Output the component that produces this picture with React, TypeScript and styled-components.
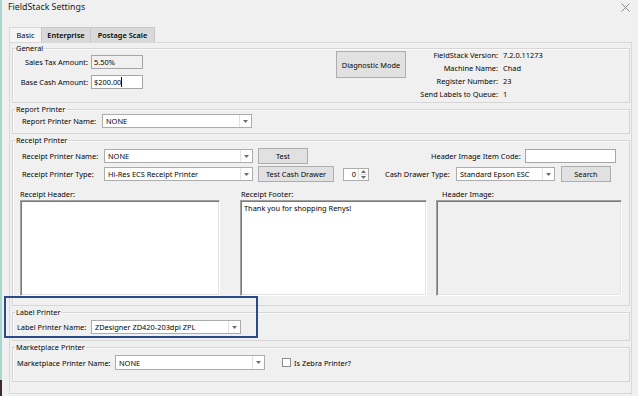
import React from 'react'
import styled, { createGlobalStyle } from 'styled-components'

const GlobalStyle = createGlobalStyle`
  html, body {
    margin: 0;
    padding: 0;
    background: #f0f0f0;
  }
  body {
    font-family: 'Noto Sans', 'Open Sans', sans-serif;
  }
`

const Window = styled.div`
  position: relative;
  width: 638px;
  height: 396px;
  display: flex;
  background: #f0f0f0;
  color: #050505;
  font-size: 7.4px;
  overflow: hidden;
`

const Edge = styled.div`
  width: 2px;
  display: flex;
  flex-direction: column;
`
const EdgeTop = styled.div`
  flex: 1;
  background: #a9d6cf;
`
const EdgeBottom = styled.div`
  height: 16px;
  background: #3b2c2b;
`

const Main = styled.div`
  flex: 1;
  display: flex;
  flex-direction: column;
`

const TitleBar = styled.div`
  height: 27px;
  display: flex;
  justify-content: space-between;
  align-items: flex-start;
  padding: 2px 8px 0 6px;
  box-sizing: border-box;
`
const Title = styled.div`
  font-size: 8.8px;
  line-height: 11px;
  color: #1a1a1a;
`
const CloseButton = styled.div`
  width: 9px;
  height: 9px;
  margin-top: 1px;
  display: flex;
`

const TabStrip = styled.div`
  display: flex;
  height: 15px;
  margin-left: 7px;
`
const Tab = styled.div<{ $w: number; $active?: boolean }>`
  width: ${p => p.$w}px;
  box-sizing: border-box;
  display: flex;
  align-items: center;
  justify-content: center;
  background: ${p => (p.$active ? '#f5f5f5' : '#d9d9d9')};
  border: 1px solid ${p => (p.$active ? '#d9d9d9' : '#c6c6c6')};
  border-bottom: none;
  margin-left: ${p => (p.$active ? 0 : -1)}px;
  font-weight: ${p => (p.$active ? 400 : 600)};
`

const TabPage = styled.div`
  height: 352px;
  margin: 0 6px 0 7px;
  padding: 0 1px 0 2px;
  border: 1px solid #d9d9d9;
  box-sizing: border-box;
  display: flex;
  flex-direction: column;
  gap: 1px;
`

const Group = styled.fieldset<{ $h: number }>`
  margin: 0;
  padding: 0;
  min-width: 0;
  height: ${p => p.$h}px;
  box-sizing: border-box;
  border: 1px solid #d6d6d6;
  box-shadow: inset 1px 1px 0 #fafafa;
`
const Legend = styled.legend`
  margin-left: 2px;
  padding: 0 1px;
  line-height: 10px;
`

const GeneralBody = styled.div`
  display: flex;
  align-items: flex-start;
`
const FieldGrid = styled.div`
  display: grid;
  grid-template-columns: 75px 52px;
  grid-auto-rows: 14px;
  column-gap: 3px;
  row-gap: 6px;
  padding-top: 2px;
`
const RightLabel = styled.div`
  text-align: right;
  align-self: center;
  white-space: nowrap;
`
const InfoGrid = styled.div`
  display: grid;
  grid-template-columns: 92px auto;
  grid-auto-rows: 13px;
  column-gap: 5px;
  margin-top: -5px;
  align-items: center;
`

const Row = styled.div<{ $h: number; $top?: number; $left?: number }>`
  display: flex;
  align-items: center;
  height: ${p => p.$h}px;
  margin-top: ${p => p.$top || 0}px;
  padding-left: ${p => p.$left || 0}px;
`
const Label = styled.div<{ $w?: number; $ml?: number; $right?: boolean }>`
  width: ${p => (p.$w ? `${p.$w}px` : 'auto')};
  margin-left: ${p => p.$ml || 0}px;
  text-align: ${p => (p.$right ? 'right' : 'left')};
  white-space: nowrap;
  flex-shrink: 0;
`

const TextBox = styled.div<{ $w?: number; $readOnly?: boolean; $ml?: number }>`
  width: ${p => (p.$w ? `${p.$w}px` : '100%')};
  height: 14px;
  margin-left: ${p => p.$ml || 0}px;
  box-sizing: border-box;
  border: 1px solid #a6a6a6;
  background: ${p => (p.$readOnly ? '#f0f0f0' : '#fff')};
  padding: 0 2px;
  display: flex;
  align-items: center;
  white-space: nowrap;
  flex-shrink: 0;
`
const Caret = styled.span`
  display: inline-block;
  width: 1px;
  height: 10px;
  background: #000;
`

const Combo = styled.div<{ $w: number; $h?: number }>`
  width: ${p => p.$w}px;
  height: ${p => p.$h || 14}px;
  box-sizing: border-box;
  border: 1px solid #acacac;
  background: #fff;
  display: flex;
  flex-shrink: 0;
`
const ComboValue = styled.div`
  flex: 1;
  padding-left: 3px;
  display: flex;
  align-items: center;
  white-space: nowrap;
  overflow: hidden;
`
const ComboArrow = styled.div`
  width: 11px;
  border-left: 1px solid #e2e2e2;
  display: flex;
  align-items: center;
  justify-content: center;
`

const Button = styled.div<{ $w: number; $h?: number; $ml?: number; $mt?: number }>`
  width: ${p => p.$w}px;
  height: ${p => p.$h || 16}px;
  margin-left: ${p => p.$ml || 0}px;
  margin-top: ${p => p.$mt || 0}px;
  box-sizing: border-box;
  border: 1px solid #adadad;
  background: #e1e1e1;
  display: flex;
  align-items: center;
  justify-content: center;
  white-space: nowrap;
  flex-shrink: 0;
`

const Spin = styled.div<{ $ml: number }>`
  width: 26px;
  height: 13px;
  margin-left: ${p => p.$ml}px;
  box-sizing: border-box;
  border: 1px solid #acacac;
  background: #fff;
  display: flex;
  flex-shrink: 0;
`
const SpinValue = styled.div`
  flex: 1;
  text-align: right;
  padding-right: 2px;
  line-height: 11px;
`
const SpinArrows = styled.div`
  width: 9px;
  display: flex;
  flex-direction: column;
  border-left: 1px solid #e2e2e2;
`
const SpinHalf = styled.div`
  flex: 1;
  display: flex;
  align-items: center;
  justify-content: center;
  & + & {
    border-top: 1px solid #e2e2e2;
  }
`

const CheckBox = styled.div<{ $ml: number }>`
  width: 9px;
  height: 9px;
  margin-left: ${p => p.$ml}px;
  margin-right: 3px;
  box-sizing: border-box;
  border: 1px solid #8c8c8c;
  background: #fff;
  flex-shrink: 0;
`

const PanelGrid = styled.div`
  display: grid;
  grid-template-columns: 200px 187px 175px;
  column-gap: 20px;
  margin: 7px 0 0 7px;
  & > :nth-child(3) {
    margin-left: -11px;
  }
`
const PanelCell = styled.div`
  display: flex;
  flex-direction: column;
`
const Caption = styled.div<{ $ml?: number }>`
  height: 11px;
  line-height: 10px;
  margin-left: ${p => p.$ml || 0}px;
`
const Memo = styled.div<{ $disabled?: boolean }>`
  height: 96px;
  box-sizing: border-box;
  border: 1px solid;
  border-color: #a0a0a0 #ffffff #ffffff #a0a0a0;
  box-shadow: inset 1px 1px 0 #7a7a7a, inset -1px -1px 0 #e3e3e3;
  background: ${p => (p.$disabled ? '#f0f0f0' : '#fff')};
  padding: 2px 3px;
  line-height: 10px;
`

const Highlight = styled.div`
  position: absolute;
  left: 4px;
  top: 296px;
  width: 254px;
  height: 42px;
  box-sizing: border-box;
  border: 2px solid #2a4a8b;
  pointer-events: none;
`

const Arrow = () => (
  <svg width='5' height='3' viewBox='0 0 5 3'>
    <path d='M0 0h5L2.5 3z' fill='#6d6d6d' />
  </svg>
)

const SpinGlyph: React.FC<{ up?: boolean }> = ({ up }) => (
  <svg width='5' height='3' viewBox='0 0 5 3'>
    <path d={up ? 'M0 3h5L2.5 0z' : 'M0 0h5L2.5 3z'} fill='#6d6d6d' />
  </svg>
)

const ComboBox: React.FC<{ w: number; value: string; h?: number }> = ({ w, value, h }) => (
  <Combo $w={w} $h={h}>
    <ComboValue>{value}</ComboValue>
    <ComboArrow>
      <Arrow />
    </ComboArrow>
  </Combo>
)

const info = [
  ['FieldStack Version:', '7.2.0.11273'],
  ['Machine Name:', 'Chad'],
  ['Register Number:', '23'],
  ['Send Labels to Queue:', '1']
]

export default function App() {
  return (
    <Window>
      <GlobalStyle />
      <Edge>
        <EdgeTop />
        <EdgeBottom />
      </Edge>
      <Main>
        <TitleBar>
          <Title>FieldStack Settings</Title>
          <CloseButton>
            <svg width='9' height='9' viewBox='0 0 9 9'>
              <path d='M0.5 0.5l8 8M8.5 0.5l-8 8' stroke='#8a8a8a' strokeWidth='1' />
            </svg>
          </CloseButton>
        </TitleBar>
        <TabStrip>
          <Tab $w={33} $active>Basic</Tab>
          <Tab $w={50}>Enterprise</Tab>
          <Tab $w={65}>Postage Scale</Tab>
        </TabStrip>
        <TabPage>
          <Group $h={60}>
            <Legend>General</Legend>
            <GeneralBody>
              <FieldGrid>
                <RightLabel>Sales Tax Amount:</RightLabel>
                <TextBox $readOnly>5.50%</TextBox>
                <RightLabel>Base Cash Amount:</RightLabel>
                <TextBox>
                  $200.00
                  <Caret />
                </TextBox>
              </FieldGrid>
              <Button $w={70} $h={27} $ml={193} $mt={-2}>
                Diagnostic Mode
              </Button>
              <InfoGrid>
                {info.map(([k, v]) => (
                  <React.Fragment key={k}>
                    <RightLabel>{k}</RightLabel>
                    <div>{v}</div>
                  </React.Fragment>
                ))}
              </InfoGrid>
            </GeneralBody>
          </Group>

          <Group $h={30}>
            <Legend>Report Printer</Legend>
            <Row $h={14} $left={9}>
              <Label $w={80}>Report Printer Name:</Label>
              <ComboBox w={150} value='NONE' />
            </Row>
          </Group>

          <Group $h={171}>
            <Legend>Receipt Printer</Legend>
            <Row $h={16} $top={3} $left={9}>
              <Label $w={82}>Receipt Printer Name:</Label>
              <ComboBox w={149} value='NONE' />
              <Button $w={50} $ml={5}>Test</Button>
              <Label $w={88} $ml={123} $right>
                Header Image Item Code:
              </Label>
              <TextBox $w={91} $ml={6} />
            </Row>
            <Row $h={16} $top={2} $left={9}>
              <Label $w={82}>Receipt Printer Type:</Label>
              <ComboBox w={149} value='Hi-Res ECS Receipt Printer' />
              <Button $w={76} $ml={5}>Test Cash Drawer</Button>
              <Spin $ml={9}>
                <SpinValue>0</SpinValue>
                <SpinArrows>
                  <SpinHalf>
                    <SpinGlyph up />
                  </SpinHalf>
                  <SpinHalf>
                    <SpinGlyph />
                  </SpinHalf>
                </SpinArrows>
              </Spin>
              <Label $w={71} $ml={16}>Cash Drawer Type:</Label>
              <ComboBox w={99} value='Standard Epson ESC' />
              <Button $w={50} $ml={6}>Search</Button>
            </Row>
            <PanelGrid>
              <PanelCell>
                <Caption>Receipt Header:</Caption>
                <Memo />
              </PanelCell>
              <PanelCell>
                <Caption $ml={1}>Receipt Footer:</Caption>
                <Memo>Thank you for shopping Renys!</Memo>
              </PanelCell>
              <PanelCell>
                <Caption $ml={6}>Header Image:</Caption>
                <Memo $disabled />
              </PanelCell>
            </PanelGrid>
          </Group>

          <Group $h={34}>
            <Legend>Label Printer</Legend>
            <Row $h={14} $top={3} $left={4}>
              <Label $w={74}>Label Printer Name:</Label>
              <ComboBox w={150} value='ZDesigner ZD420-203dpi ZPL' />
            </Row>
          </Group>

          <Group $h={40}>
            <Legend>Marketplace Printer</Legend>
            <Row $h={15} $top={3} $left={4}>
              <Label $w={98}>Marketplace Printer Name:</Label>
              <ComboBox w={150} h={15} value='NONE' />
              <CheckBox $ml={17} />
              <Label>Is Zebra Printer?</Label>
            </Row>
          </Group>
        </TabPage>
      </Main>
      <Highlight />
    </Window>
  )
}
